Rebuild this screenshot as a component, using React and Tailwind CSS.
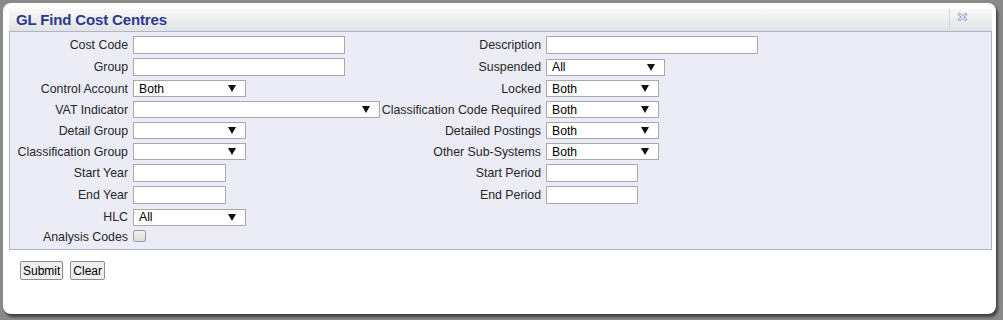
import React from "react";

const font = { fontFamily: '"Liberation Sans", Arial, sans-serif' };

function Arrow() {
  return (
    <svg width="8" height="7" viewBox="0 0 8 7" className="shrink-0">
      <path d="M0 0 L8 0 L4 7 Z" fill="#111" />
    </svg>
  );
}

function Select({ value = "", w }) {
  return (
    <div className={`${w} h-[17px] border border-[#a9a9a9] bg-white flex items-center justify-between pl-[5px] pr-[9px] text-[12.2px] leading-[14px] text-black`}>
      <span>{value}</span>
      <Arrow />
    </div>
  );
}

function Input({ w }) {
  return <div className={`${w} h-[18px] border border-[#a9a9a9] bg-white`} />;
}

function L1({ children, top }) {
  return (
    <div className={`flex ${top ? "items-start pt-[2px]" : "items-center"} justify-end pr-[5px] text-[12.35px] leading-[14px] text-[#262626] whitespace-nowrap`}>
      {children}
    </div>
  );
}

function C({ children, top }) {
  return <div className={`flex ${top ? "items-start pt-[2px]" : "items-center"}`}>{children}</div>;
}

export default function App() {
  return (
    <div style={font} className="w-[1003px] h-[320px] bg-[#8a8a8a] pt-[3px] pl-[3px] overflow-hidden">
      <div className="w-[993px] h-[311px] bg-white rounded-[8px] pt-[6px] pl-[6px] pr-[4px] shadow-[2px_3px_3px_rgba(0,0,0,0.55)]">
        {/* header */}
        <div className="h-[22px] flex items-center bg-gradient-to-b from-[#f8f8f8] to-[#e1e3e6]">
          <div className="flex-1 pl-[7px] text-[15px] tracking-[-0.15px] font-bold text-[#2a3990] leading-[18px]">
            GL Find Cost Centres
          </div>
          <div className="h-[22px] w-[43px] border-l border-[#d2d6da] flex items-start pl-[7px] pt-[3px]">
            <svg width="11" height="10" viewBox="0 0 11 10">
              <path
                d="M1 2.5 L2.5 1 L5.5 3.8 L8.5 1 L10 2.5 L7 5 L10 7.5 L8.5 9 L5.5 6.2 L2.5 9 L1 7.5 L4 5 Z"
                fill="#f4f6fb"
                stroke="#7f8fc6"
                strokeWidth="1"
                strokeLinejoin="round"
              />
            </svg>
          </div>
        </div>
        {/* panel */}
        <div className="border border-[#aab5c6] bg-[#ececf6] pt-[2px]">
          <div className="grid grid-cols-[123px_247px_166px_1fr] grid-rows-[22px_22px_21px_21px_21px_21px_22px_22px_22px_21px]">
            <L1>Cost Code</L1>
            <C><Input w="w-[212px]" /></C>
            <L1>Description</L1>
            <C><Input w="w-[212px]" /></C>

            <L1>Group</L1>
            <C><Input w="w-[212px]" /></C>
            <L1>Suspended</L1>
            <C><Select value="All" w="w-[119px]" /></C>

            <L1>Control Account</L1>
            <C><Select value="Both" w="w-[113px]" /></C>
            <L1>Locked</L1>
            <C><Select value="Both" w="w-[113px]" /></C>

            <L1>VAT Indicator</L1>
            <C><Select value="" w="w-[247px]" /></C>
            <L1>Classification Code Required</L1>
            <C><Select value="Both" w="w-[113px]" /></C>

            <L1>Detail Group</L1>
            <C><Select value="" w="w-[113px]" /></C>
            <L1>Detailed Postings</L1>
            <C><Select value="Both" w="w-[113px]" /></C>

            <L1>Classification Group</L1>
            <C><Select value="" w="w-[113px]" /></C>
            <L1>Other Sub-Systems</L1>
            <C><Select value="Both" w="w-[113px]" /></C>

            <L1>Start Year</L1>
            <C><Input w="w-[93px]" /></C>
            <L1>Start Period</L1>
            <C><Input w="w-[92px]" /></C>

            <L1>End Year</L1>
            <C><Input w="w-[93px]" /></C>
            <L1>End Period</L1>
            <C><Input w="w-[92px]" /></C>

            <L1>HLC</L1>
            <C><Select value="All" w="w-[113px]" /></C>
            <div />
            <div />

            <L1 top>Analysis Codes</L1>
            <C top>
              <div className="w-[13px] h-[12px] rounded-[2px] border border-[#9c9c9c] bg-gradient-to-b from-[#f0f0f0] to-[#dcdcdc]" />
            </C>
            <div />
            <div />
          </div>
        </div>
        {/* buttons */}
        <div className="flex gap-[7px] pl-[11px] mt-[11px]">
          <button className="h-[19px] px-[2px] border border-[#8e8e8e] rounded-[2px] bg-[#efefef] text-[12px] leading-[14px] text-black">
            Submit
          </button>
          <button className="h-[19px] px-[2px] border border-[#8e8e8e] rounded-[2px] bg-[#efefef] text-[12px] leading-[14px] text-black">
            Clear
          </button>
        </div>
      </div>
    </div>
  );
}
